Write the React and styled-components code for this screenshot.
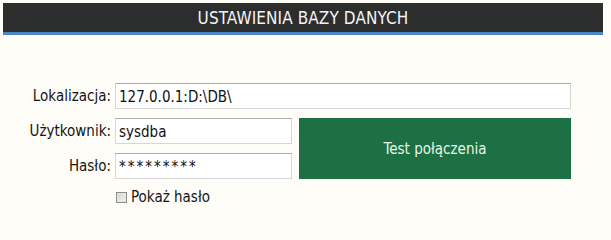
import React from 'react';
import styled, { createGlobalStyle } from 'styled-components';

const GlobalStyle = createGlobalStyle`
  html, body {
    margin: 0;
    padding: 0;
    background: #fffdf8;
  }
  body {
    font-family: "DejaVu Sans Condensed", "DejaVu Sans", sans-serif;
    font-stretch: condensed;
  }
`;

const Page = styled.div`
  width: 611px;
  height: 210px;
  padding: 3px 8px 0 3px;
  box-sizing: border-box;
  background: #fffdf8;
`;

const Header = styled.div`
  height: 29px;
  width: 600px;
  background: #2c2e2d;
  border-bottom: 3px solid #4a88c8;
  color: #f4f4f4;
  font-size: 17px;
  display: flex;
  align-items: center;
  justify-content: center;
  letter-spacing: 0.1px;
`;

const Form = styled.div`
  display: grid;
  grid-template-columns: 108px 177px 275px;
  grid-template-rows: 26px 26px 26px 22px;
  column-gap: 4px;
  row-gap: 9px;
  margin-top: 48px;
`;

const Label = styled.label`
  font-size: 15px;
  color: #141414;
  text-align: right;
  align-self: center;
  white-space: nowrap;
`;

const Field = styled.input`
  box-sizing: border-box;
  height: 26px;
  width: 100%;
  margin: 0;
  padding: 1px 3px 0;
  border: 1px solid #d6d6d6;
  border-top-color: #ababab;
  background: #fff;
  font-family: inherit;
  font-stretch: condensed;
  font-size: 15px;
  color: #111;
  outline: none;
  letter-spacing: ${(p) => (p.$masked ? '2px' : 'normal')};
  grid-column: ${(p) => (p.$wide ? '2 / 4' : '2')};
`;

const TestButton = styled.button`
  grid-column: 3;
  grid-row: 2 / 4;
  margin-left: 3px;
  border: none;
  background: #1d7044;
  color: #e8f6e4;
  font-family: inherit;
  font-stretch: condensed;
  font-size: 15px;
  cursor: pointer;
`;

const CheckRow = styled.label`
  grid-column: 2 / 4;
  display: flex;
  align-items: center;
  gap: 4px;
  margin-top: -5px;
  font-size: 15px;
  color: #141414;
`;

const Box = styled.input`
  appearance: none;
  box-sizing: border-box;
  width: 11px;
  height: 11px;
  margin: 1px 0 0 1px;
  border: 1px solid #8c8c8c;
  background: linear-gradient(135deg, #d4d4d4, #f3f3f3);
  box-shadow: inset 0 0 0 1px #e6e6e6;
`;

export default function App() {
  return (
    <Page>
      <GlobalStyle />
      <Header>USTAWIENIA BAZY DANYCH</Header>
      <Form>
        <Label>Lokalizacja:</Label>
        <Field $wide defaultValue="127.0.0.1:D:\DB\" />
        <Label>Użytkownik:</Label>
        <Field defaultValue="sysdba" />
        <TestButton>Test połączenia</TestButton>
        <Label>Hasło:</Label>
        <Field $masked defaultValue="*********" />
        <span />
        <CheckRow>
          <Box type="checkbox" />
          Pokaż hasło
        </CheckRow>
      </Form>
    </Page>
  );
}
